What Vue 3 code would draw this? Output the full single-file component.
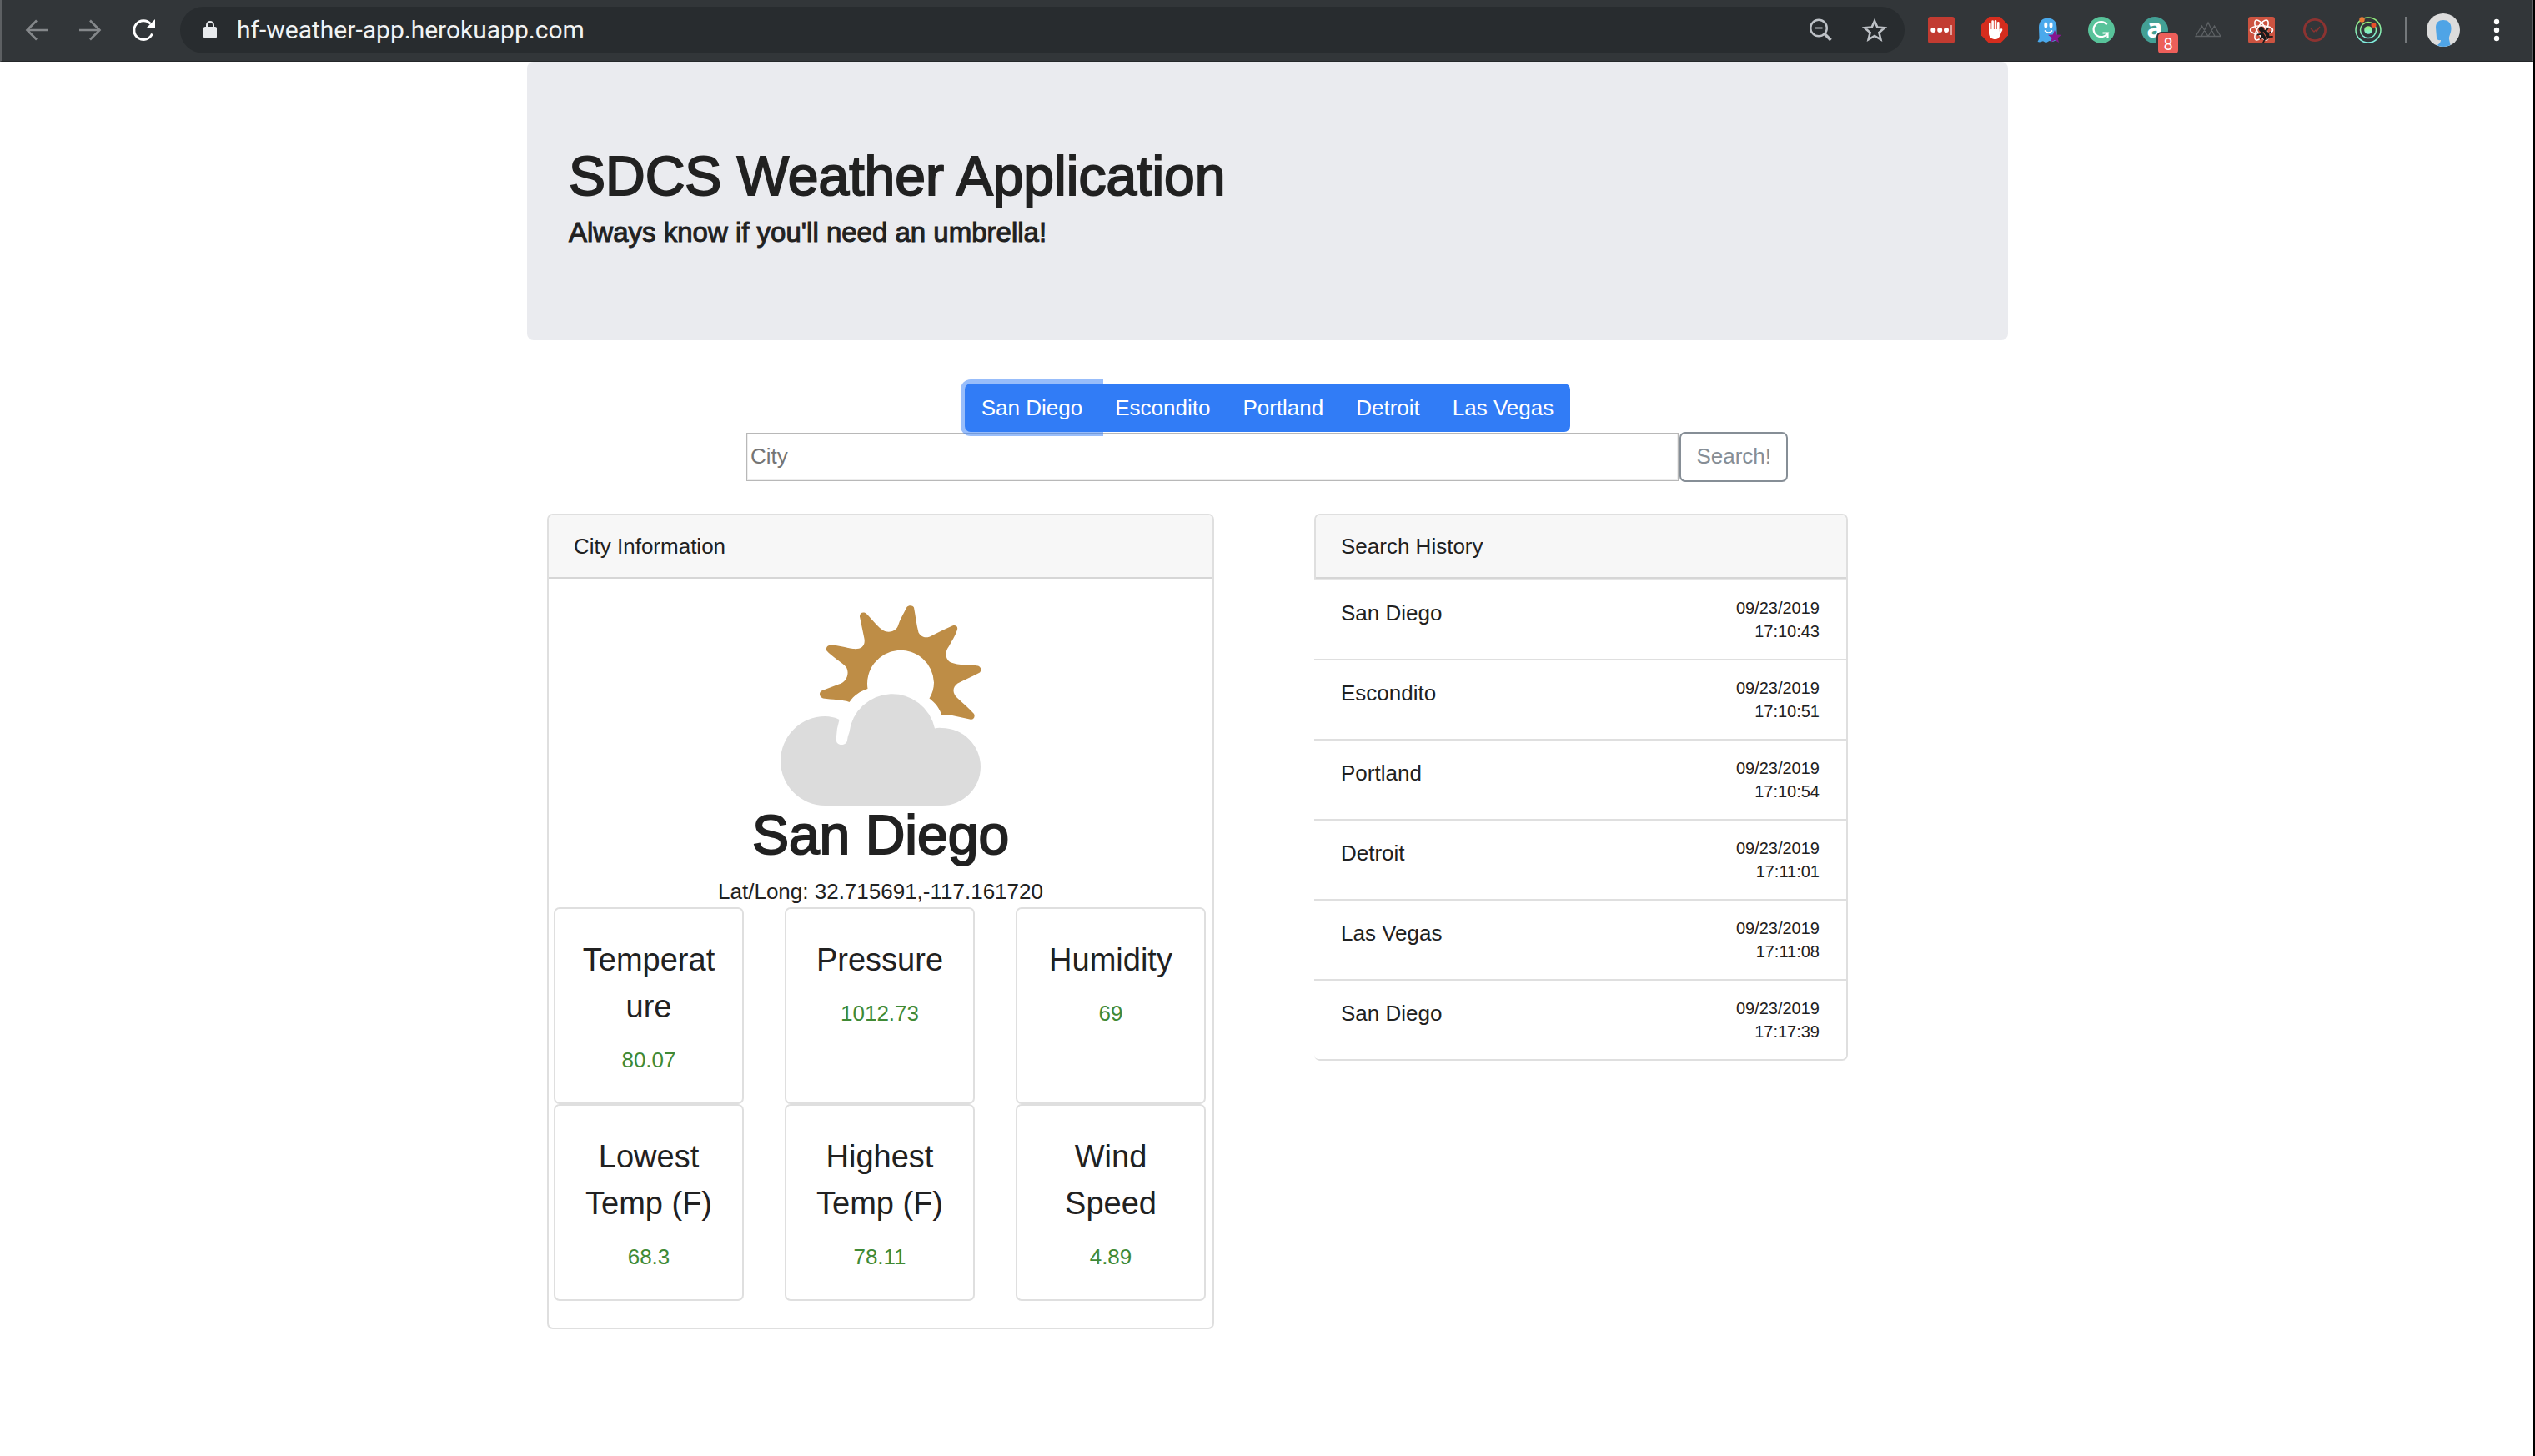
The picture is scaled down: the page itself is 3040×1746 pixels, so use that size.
<script setup>
import { ref } from 'vue'

const address = ref('hf-weather-app.herokuapp.com')
const query = ref('')
const cities = ['San Diego', 'Escondito', 'Portland', 'Detroit', 'Las Vegas']
const selected = ref(0)

const readings = [
  { title: 'Temperature', value: '80.07' },
  { title: 'Pressure', value: '1012.73' },
  { title: 'Humidity', value: '69' },
  { title: 'Lowest Temp (F)', value: '68.3' },
  { title: 'Highest Temp (F)', value: '78.11' },
  { title: 'Wind Speed', value: '4.89' }
]

const history = [
  { city: 'San Diego', date: '09/23/2019', time: '17:10:43' },
  { city: 'Escondito', date: '09/23/2019', time: '17:10:51' },
  { city: 'Portland', date: '09/23/2019', time: '17:10:54' },
  { city: 'Detroit', date: '09/23/2019', time: '17:11:01' },
  { city: 'Las Vegas', date: '09/23/2019', time: '17:11:08' },
  { city: 'San Diego', date: '09/23/2019', time: '17:17:39' }
]
</script>

<template>
  <div class="window">
    <header class="toolbar">
      <div class="nav">
        <button class="icon" aria-label="Back">
          <svg viewBox="0 0 32 32" fill="none" stroke="#85888b" stroke-width="2.6">
            <path d="M29 16H5M16 4.500L4.500 16L16 27.500" />
          </svg>
        </button>
        <button class="icon" aria-label="Forward">
          <svg viewBox="0 0 32 32" fill="none" stroke="#85888b" stroke-width="2.600">
            <path d="M3 16h24M16 4.500L27.500 16L16 27.500" />
          </svg>
        </button>
        <button class="icon" aria-label="Reload">
          <svg viewBox="0 0 32 32">
            <path d="M26.500 20.500A11.300 11.300 0 1 1 24.500 8.500" fill="none" stroke="#fff" stroke-width="3" />
            <path d="M30 3v11H19z" fill="#fff" />
          </svg>
        </button>
      </div>
      <div class="omnibox">
        <svg class="lock" viewBox="0 0 16 22">
          <rect y="7" width="16" height="14" rx="2" fill="#e8eaed" />
          <path d="M4 8V5a4 4 0 0 1 8 0v3" fill="none" stroke="#e8eaed" stroke-width="2" />
        </svg>
        <input v-model="address" class="address" type="text" aria-label="Address" />
        <button class="icon" aria-label="Zoom">
          <svg viewBox="0 0 32 32" fill="none" stroke="#bdc1c6">
            <circle cx="13" cy="13.500" r="9.800" stroke-width="2.400" />
            <path d="M8.500 13.500h9" stroke-width="2" />
            <path d="M20 20.500l7.500 7.500" stroke-width="3.600" />
          </svg>
        </button>
        <button class="icon" aria-label="Bookmark">
          <svg viewBox="0 0 32 32" fill="none" stroke="#bdc1c6" stroke-width="2.600">
            <path d="M16 5L19.300 12.500L28 13.300L21.400 19L23.400 27.300L16 23L8.600 27.300L10.600 19L4 13.300L12.700 12.500Z" />
          </svg>
        </button>
      </div>
      <div class="extensions">
        <svg class="icon" viewBox="0 0 32 32">
          <rect width="32" height="32" rx="3" fill="#c23b31" />
          <g fill="#fff"><circle cx="6.300" cy="16" r="3" /><circle cx="14.200" cy="16" r="3" /><circle cx="22" cy="16" r="3" /></g>
          <path d="M28 10v12" stroke="#efc4c0" stroke-width="1.500" />
        </svg>
        <svg class="icon" viewBox="0 0 32 32">
          <path d="M9.400 0h13.200L32 9.400v13.200L22.600 32H9.400L0 22.600V9.400z" fill="#d52d1e" />
          <g fill="none" stroke="#fff" stroke-width="2.600" stroke-linecap="round">
            <path d="M10.300 18V8.500M13.600 16V5.500M17 16V5.200M20.300 16V7.200" />
            <path d="M24 15.500L21.500 20" />
          </g>
          <path d="M9 15h12.600l.2 3 3.200-2.500c-1.600 4-2.600 11.300-7.500 11.500-5 .2-8.300-2.500-8.500-7z" fill="#fff" />
        </svg>
        <svg class="icon" viewBox="0 0 32 32">
          <path d="M5 13C5 5 10 1.500 15.500 1.500S26.500 5 26.500 13v15l-5 2-4-1-4 2.200-3.500-2-4 1.300-2.500-.5 2-4z" fill="#4aa9ec" />
          <g fill="#fff"><ellipse cx="13.300" cy="10" rx="2" ry="3.600" /><ellipse cx="19.500" cy="10" rx="2" ry="3.600" /></g>
          <path d="M12 16.500c3 3.500 6 3.500 9 0" fill="none" stroke="#fff" stroke-width="1.800" />
          <path d="M24 16l2.300 5.500 5.700.3-4.400 3.800L29 31l-5-3-5 3 1.500-5.400-4.500-3.800 5.700-.3z" fill="#86178e" />
        </svg>
        <svg class="icon" viewBox="0 0 32 32">
          <circle cx="16" cy="16" r="16" fill="#58c39a" />
          <path d="M22.600 9.500A9 9 0 1 0 23.500 19.500H17.500M23.500 25v-5.500" fill="none" stroke="#fff" stroke-width="2.200" />
        </svg>
        <div class="icon badged">
          a
          <span class="badge">8</span>
        </div>
        <svg class="icon" viewBox="0 0 32 32" fill="none" stroke="#5d6164" stroke-width="1.300">
          <path d="M1 23.500L8.500 11L16 23.500zM8 23.500L16 7L24 23.500zM16 23.500L23.500 11L31 23.500z" />
        </svg>
        <svg class="icon" viewBox="0 0 32 32">
          <rect width="32" height="32" rx="3" fill="#cc5340" />
          <g fill="none" stroke="#fff" stroke-width="1.600">
            <ellipse cx="16" cy="16" rx="13.500" ry="5.200" />
            <ellipse cx="16" cy="16" rx="13.500" ry="5.200" transform="rotate(60 16 16)" />
            <ellipse cx="16" cy="16" rx="13.500" ry="5.200" transform="rotate(120 16 16)" />
          </g>
          <g transform="rotate(-32 19 20)">
            <ellipse cx="19" cy="22" rx="5" ry="6.500" fill="#1b1b1b" />
            <circle cx="19" cy="14" r="3" fill="#1b1b1b" />
            <path d="M11 17l5 2M11 23h5M12 29l5-3M27 17l-5 2M27 23h-5M26 29l-5-3" stroke="#1b1b1b" stroke-width="1.800" />
            <path d="M19 18v10" stroke="#cc5340" stroke-width="1" />
          </g>
        </svg>
        <svg class="icon" viewBox="0 0 32 32" fill="none" stroke="#8c3331">
          <circle cx="16" cy="16" r="12.600" stroke-width="2.800" />
          <path d="M11 14l4 4 2-2 1 1.500L22 12" stroke-width="1.400" />
        </svg>
        <svg class="icon" viewBox="0 0 32 32">
          <defs>
            <linearGradient id="rings" x2="0" y2="1">
              <stop offset="0" stop-color="#93ee75" />
              <stop offset="1" stop-color="#80efe3" />
            </linearGradient>
          </defs>
          <g fill="none" stroke="url(#rings)" stroke-width="1.500">
            <circle cx="16" cy="16" r="15" />
            <circle cx="16" cy="16" r="9.500" />
          </g>
          <circle cx="16" cy="16" r="4.800" fill="url(#rings)" />
          <circle cx="8.500" cy="3.500" r="3.200" fill="#ec7d35" />
          <circle cx="22.500" cy="10" r="3" fill="#e9512a" />
        </svg>
      </div>
      <div class="divider"></div>
      <button class="avatar" aria-label="Profile">
        <svg viewBox="0 0 40 40">
          <circle cx="20" cy="20" r="20" fill="#dcdcdc" />
          <path d="M11 17c0-6 3.500-9 9-9s9.500 3 9.500 10c0 6-3 9-2.500 13l1.500 7a20 20 0 0 1-16 .3c2-1 4.500-3.500 4.500-6.300-3 .5-5-.5-5-3z" fill="#4fa4e6" />
        </svg>
      </button>
      <button class="menu" aria-label="Menu">
        <svg viewBox="0 0 8 32" fill="#fff">
          <circle cx="4" cy="6" r="3.200" /><circle cx="4" cy="16" r="3.200" /><circle cx="4" cy="26" r="3.200" />
        </svg>
      </button>
    </header>

    <main class="container">
      <section class="jumbotron">
        <h1>SDCS Weather Application</h1>
        <h5>Always know if you'll need an umbrella!</h5>
      </section>

      <div class="city-group" role="group" aria-label="Cities">
        <button
          v-for="(city, i) in cities"
          :key="city"
          class="city-button"
          :class="{ focused: selected === i }"
          @click="selected = i"
        >{{ city }}</button>
      </div>

      <form class="search" @submit.prevent>
        <input v-model="query" type="text" placeholder="City" aria-label="City" />
        <button type="submit">Search!</button>
      </form>

      <div class="columns">
        <section class="card">
          <div class="card-header">City Information</div>
          <div class="card-body">
            <svg class="weather" viewBox="0 0 240 240" role="img" aria-label="Few clouds">
              <path
                fill="#be8d46"
                d="M82.500 116C76 113 62 113 51 111.500C46 109 46 105 49 102.500L70 94.500C79 92 83 82 79 74.500C75 69 62 62 55 54C54 50 57 47.500 61 47.500C70 48 79 51 87 52C96 53 102 49 100.500 40L95 13.500C94.500 9.500 99 6.500 103 10C109 16 115 24 121 28.500C128 34 137 32 140.500 25.500C143 17 148 9 151.500 2C153.500-.5 158.500-.5 160 2.500C162 13 163 23 165.500 32.500C169 39 176 40 182 36C190 32 198 28 206 24.500C210 23 213 25 212 29C210 36 205 43 202 49C197 55 197 65 204.500 68.500C213 72 228 71 237 72.500C241 74 241 78 239 80.500C231 85 221 89 212.500 93.500C206 98 206 105 211.500 110.500C218 117 226 123 232 130C234 134 231 138 227 136.500L206 132C202 131.500 197 132 193.500 132C191 124 186 117 178.500 111.500C182 106 184 99 184 92.500A40 40 0 1 0 104.500 100C95 103 88 108 82.500 116Z"
              />
              <path
                fill="#dcdcdc"
                d="M70.500 137C65 134 59 133 53.500 133A53.500 53.500 0 0 0 53.500 240H193.500A46.500 46.500 0 0 0 193.500 147Q189 146.500 185 147.500A52 52 0 0 0 82.500 152Q80.500 157 80 161.500C79.500 165.500 76.500 167 73 167C69 167 66.500 164.500 66.700 160Q67 148 70.500 137Z"
              />
            </svg>
            <h1>San Diego</h1>
            <p class="coords">Lat/Long: 32.715691,-117.161720</p>
            <div class="readings">
              <article v-for="reading in readings" :key="reading.title" class="reading">
                <div class="reading-title">{{ reading.title }}</div>
                <div class="reading-value">{{ reading.value }}</div>
              </article>
            </div>
          </div>
        </section>

        <section class="card">
          <div class="card-header">Search History</div>
          <ul class="history">
            <li v-for="entry in history" :key="entry.time">
              <span>{{ entry.city }}</span>
              <span class="stamp">{{ entry.date }}<br />{{ entry.time }}</span>
            </li>
          </ul>
        </section>
      </div>
    </main>
  </div>
</template>

<style>
body {
  margin: 0;
  background: #fff;
}
</style>

<style scoped>
* {
  box-sizing: border-box;
}

.window {
  position: relative;
  min-height: 100vh;
  font-family: "Liberation Sans", Arial, sans-serif;
  font-size: 26px;
  line-height: 38px;
  color: #212121;
}

.window::after {
  content: "";
  position: absolute;
  top: 0;
  right: 0;
  bottom: 0;
  width: 2px;
  background: #000;
}

button,
input {
  font: inherit;
  margin: 0;
}

svg {
  display: block;
}

h1,
h5,
p,
ul {
  margin: 0;
  padding: 0;
}

/* Browser toolbar */
.toolbar {
  display: flex;
  align-items: center;
  height: 74px;
  padding: 0 38px 2px 26px;
  background: #323639;
  border-left: 2px solid #5d6063;
  border-right: 4px solid #5d6063;
  border-bottom: 1px solid #242729;
}

.toolbar button {
  padding: 0;
  border: 0;
  background: none;
}

.icon {
  flex: none;
  width: 32px;
  height: 32px;
}

.nav,
.extensions {
  display: flex;
  flex: none;
  gap: 32px;
}

.omnibox {
  display: flex;
  flex: 1;
  align-items: center;
  gap: 32px;
  height: 56px;
  margin: 0 28px;
  padding: 0 20px 0 28px;
  border-radius: 28px;
  background: #282c2f;
}

.lock {
  flex: none;
  width: 16px;
  height: 22px;
}

.address {
  flex: 1;
  min-width: 0;
  margin-left: -8px;
  padding: 0;
  border: 0;
  outline: 0;
  background: none;
  color: #f1f3f4;
  font-family: Roboto, sans-serif;
  font-size: 30px;
}

.badged {
  position: relative;
  border-radius: 50%;
  background: #43a095;
  color: #fff;
  font: bold 32px/26px "Open Sans", sans-serif;
  text-align: center;
}

.badge {
  position: absolute;
  left: 20px;
  top: 20px;
  width: 24px;
  height: 24px;
  border-radius: 4px;
  background: #ed5f5a;
  color: #fff;
  font: 20px/26px Roboto, sans-serif;
  text-align: center;
  box-shadow: 0 0 0 2px #323639;
}

.divider {
  width: 2px;
  height: 32px;
  margin: 0 24px 0 28px;
  background: #74787b;
}

.avatar {
  width: 40px;
  height: 40px;
}

.menu {
  width: 8px;
  height: 32px;
  margin-left: 40px;
}

/* Page */
.container {
  max-width: 1776px;
  margin: 0 auto;
}

.jumbotron {
  padding: 102px 50px 110px;
  border-radius: 8px;
  background: #eaebef;
}

h1 {
  margin-bottom: 14px;
  font-size: 66px;
  font-weight: 400;
  line-height: 70px;
  -webkit-text-stroke: 2px #212121;
}

h5 {
  margin: 0;
  font-size: 33px;
  font-weight: 400;
  line-height: 38px;
  -webkit-text-stroke: 1px #212121;
}

.city-group {
  position: relative;
  z-index: 1;
  display: flex;
  justify-content: center;
  margin-top: 52px;
}

.city-button {
  position: relative;
  padding: 8px 18px;
  border: 2px solid #317cf6;
  background: #317cf6;
  color: #fff;
}

.city-button + .city-button {
  margin-left: -1px;
}

.city-button:first-child {
  border-radius: 7px 0 0 7px;
}

.city-button:last-child {
  border-radius: 0 7px 7px 0;
}

.city-button.focused {
  box-shadow: 0 0 0 5px rgba(49, 124, 246, 0.5);
}

.search {
  display: flex;
  align-items: center;
  gap: 1px;
  padding: 0 264px 0 263px;
}

.search input {
  flex: 1;
  min-width: 0;
  height: 58px;
  padding: 0 4px 2px;
  border: 1px solid #b8b8b8;
  border-radius: 0;
  box-shadow: inset 0 0 0 1px #ededed;
  background: #fff;
  outline: 0;
}

.search input::placeholder {
  color: #757575;
  opacity: 1;
}

.search button {
  padding: 8px 18px 10px;
  border: 2px solid #868e96;
  border-radius: 7px;
  background: #fff;
  color: #868e96;
}

.columns {
  display: grid;
  grid-template-columns: 5fr 4fr;
  gap: 120px;
  align-items: start;
  margin-top: 38px;
  padding: 0 192px 0 24px;
}

.card {
  border: 2px solid #dfdfdf;
  border-radius: 7px;
  background: #fff;
}

.card-header {
  padding: 18px 30px;
  border-bottom: 2px solid #d6d6d6;
  border-radius: 5px 5px 0 0;
  background: #f7f7f7;
}

.card-body {
  padding: 32px 6px;
  text-align: center;
}

.weather {
  width: 240px;
  height: 240px;
  margin: 0 auto;
}

.readings {
  display: grid;
  grid-template-columns: repeat(3, 228px);
  justify-content: space-between;
  padding-right: 2px;
}

.reading {
  padding: 33px 32px 32px;
  border: 2px solid #dfdfdf;
  border-radius: 7px;
}

.reading-title {
  margin-bottom: 17px;
  font-size: 38px;
  line-height: 56px;
  overflow-wrap: break-word;
}

.reading-value {
  color: #3f8a35;
}

.history {
  margin-left: -2px;
  border-top: 2px solid #e6e6e6;
  list-style: none;
}

.history li {
  display: flex;
  justify-content: space-between;
  height: 96px;
  padding: 19px 32px 18px;
  border-bottom: 2px solid #dfdfdf;
  background: #fff;
}

.history li:last-child {
  height: 94px;
  border-bottom: 0;
  border-radius: 0 0 5px 5px;
}

.history li > span:first-child {
  padding-top: 1px;
}

.stamp {
  font-size: 20px;
  line-height: 28px;
  text-align: right;
}
</style>
